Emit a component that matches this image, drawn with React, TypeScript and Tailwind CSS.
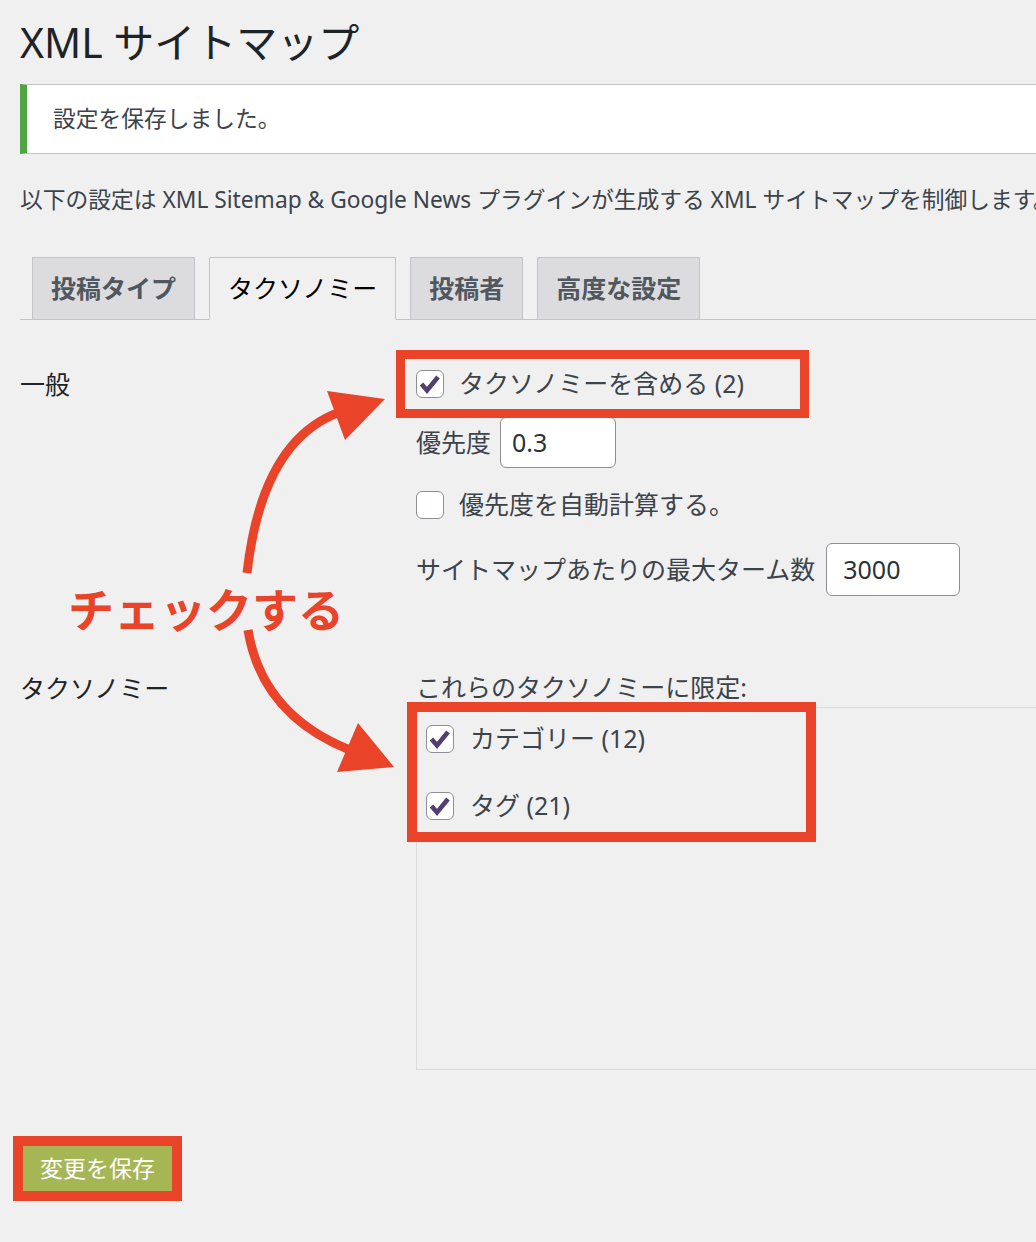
import React from 'react';

const tabs = [
  { label: '投稿タイプ', active: false },
  { label: 'タクソノミー', active: true },
  { label: '投稿者', active: false },
  { label: '高度な設定', active: false },
];

function Checkbox({ checked }: { checked?: boolean }) {
  return (
    <span className="flex h-[28px] w-[28px] shrink-0 items-center justify-center rounded-[6px] border border-[#8c8f94] bg-white">
      {checked && (
        <svg width="24" height="24" viewBox="0 0 24 24">
          <path d="M3.5 12 L9 18.5 L20 5" fill="none" stroke="#523f6d" strokeWidth="4.6" strokeLinejoin="miter" />
        </svg>
      )}
    </span>
  );
}

// red highlight frame drawn over a control
function Frame({ className }: { className: string }) {
  return <span className={`pointer-events-none absolute border-[#e9432a] ${className}`} />;
}

export default function App() {
  return (
    <div className="relative h-[1242px] w-[1036px] overflow-hidden bg-[#f0f0f1] pl-[20px] font-['Noto_Sans','Noto_Sans_CJK_JP',sans-serif]">
      <h1 className="pt-[16px] text-[41px] font-normal leading-[53px] text-[#1d2327]">XML サイトマップ</h1>

      <div className="mt-[15px] flex h-[70px] items-center border-y border-l-[7px] border-y-[#c3c4c7] border-l-[#4fa53f] bg-white pl-[26px] text-[22.75px] text-[#3c434a]">
        設定を保存しました。
      </div>

      <p className="mt-[26px] whitespace-nowrap text-[22.75px] leading-[40px] text-[#3c434a]">
        以下の設定は XML Sitemap &amp; Google News プラグインが生成する XML サイトマップを制御します。
      </p>

      <div className="mt-[37px] flex gap-[14px] border-b border-[#c3c4c7] pl-[12px]">
        {tabs.map((t) => (
          <div
            key={t.label}
            className={
              t.active
                ? 'mb-[-1px] flex h-[63px] items-center border border-[#c3c4c7] border-b-[#f0f0f1] bg-[#f0f0f1] px-[18px] text-[25px] text-black'
                : 'mb-[-1px] flex h-[63px] items-center border border-[#c3c4c7] bg-[#dcdcde] px-[18px] text-[25px] font-semibold text-[#50575e]'
            }
          >
            {t.label}
          </div>
        ))}
      </div>

      {/* 一般 */}
      <div className="mt-[44px] flex text-[25px]">
        <div className="w-[396px] shrink-0 leading-[40px] text-[#1d2327]">一般</div>
        <div className="flex flex-col text-[#3c434a]">
          <label className="relative flex h-[40px] items-center gap-[15px]">
            <Checkbox checked />
            <span>タクソノミーを含める (2)</span>
            <Frame className="left-[-20px] top-[-14px] h-[68px] w-[413px] border-[9px]" />
          </label>
          <div className="mt-[13px] flex items-center gap-[9px]">
            <span>優先度</span>
            <div className="flex h-[51px] w-[116px] items-center rounded-[6px] border border-[#8c8f94] bg-white px-[11px] text-[#2c3338]">
              0.3
            </div>
          </div>
          <label className="mt-[17px] flex h-[40px] items-center gap-[15px]">
            <Checkbox />
            <span>優先度を自動計算する。</span>
          </label>
          <div className="mt-[18px] flex items-center gap-[11px]">
            <span>サイトマップあたりの最大ターム数</span>
            <div className="flex h-[53px] w-[134px] items-center rounded-[6px] border border-[#8c8f94] bg-white px-[16px] text-[#2c3338]">
              3000
            </div>
          </div>
        </div>
      </div>

      {/* タクソノミー */}
      <div className="mt-[72px] flex text-[25px]">
        <div className="w-[396px] shrink-0 leading-[40px] text-[#1d2327]">タクソノミー</div>
        <div className="flex flex-1 flex-col text-[#3c434a]">
          <div className="leading-[39px]">これらのタクソノミーに限定:</div>
          <div className="relative mr-[-40px] flex h-[363px] flex-col gap-[27px] border border-[#dcdcde] pl-[9px] pt-[11px]">
            <label className="flex h-[40px] items-center gap-[16px]">
              <Checkbox checked />
              <span>カテゴリー (12)</span>
            </label>
            <label className="flex h-[40px] items-center gap-[16px]">
              <Checkbox checked />
              <span>タグ (21)</span>
            </label>
            <Frame className="left-[-10px] top-[-6px] h-[140px] w-[409px] border-[10px]" />
          </div>
        </div>
      </div>

      <div className="relative ml-[3px] mt-[76px] inline-block">
        <button className="h-[45px] w-[149px] bg-[#a7b655] text-[23px] text-white">変更を保存</button>
        <Frame className="-inset-[10px] border-[10px]" />
      </div>

      {/* annotation arrows */}
      <div className="pointer-events-none absolute inset-0">
        <svg width="1036" height="1242" className="absolute left-0 top-0">
          <path d="M247 573 Q262 440 340 412" fill="none" stroke="#e9432a" strokeWidth="9" />
          <polygon points="327,391 385,399 345,440" fill="#e9432a" />
          <path d="M248 630 Q262 715 350 750" fill="none" stroke="#e9432a" strokeWidth="9" />
          <polygon points="358,723 394,767 337,772" fill="#e9432a" />
        </svg>
        <span className="absolute left-[68px] top-[586px] text-[46px] font-bold leading-[46px] text-[#e9432a]">
          チェックする
        </span>
      </div>
    </div>
  );
}
